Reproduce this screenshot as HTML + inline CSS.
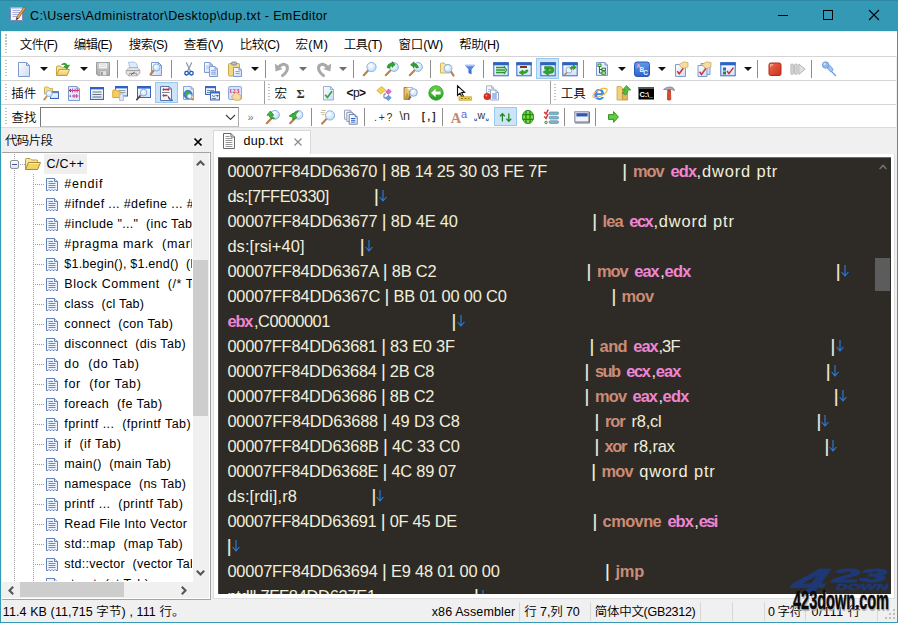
<!DOCTYPE html><html><head><meta charset="utf-8"><title>EmEditor</title><style>
*{box-sizing:border-box;margin:0;padding:0}
html,body{width:898px;height:623px;overflow:hidden}
body{position:relative;background:#f0f0f0;font-family:"Liberation Sans","Noto Sans CJK SC",sans-serif;font-size:12px;color:#000;font-weight:350}
.a{position:absolute}
.t{position:absolute;white-space:pre;line-height:1}
.e{color:#f1efdc}
.m{color:#cd8b77;font-weight:bold}
.r{color:#f086d2;font-weight:bold}
.dn{color:#2a84e8}
.bb{font-size:18.6px;line-height:0;position:relative;top:0.6px}
svg{position:absolute;overflow:visible}
</style></head><body>
<svg width="0" height="0" style="position:absolute"><defs>
<linearGradient id="gDoc" x1="0" y1="0" x2="1" y2="1"><stop offset="0" stop-color="#ffffff"/><stop offset="1" stop-color="#c9daf7"/></linearGradient>
<linearGradient id="gFold" x1="0" y1="0" x2="0" y2="1"><stop offset="0" stop-color="#fbeeb0"/><stop offset="1" stop-color="#edc85a"/></linearGradient>
<radialGradient id="gLens" cx="0.4" cy="0.35" r="0.7"><stop offset="0" stop-color="#ffffff"/><stop offset="1" stop-color="#b9dcfb"/></radialGradient>
<linearGradient id="gWin" x1="0" y1="0" x2="0" y2="1"><stop offset="0" stop-color="#ffffff"/><stop offset="1" stop-color="#cfe2fb"/></linearGradient>
<linearGradient id="gGreen" x1="0" y1="0" x2="0" y2="1"><stop offset="0" stop-color="#6fd24a"/><stop offset="1" stop-color="#1f9a1f"/></linearGradient>
<linearGradient id="gGray" x1="0" y1="0" x2="0" y2="1"><stop offset="0" stop-color="#d0d0d0"/><stop offset="1" stop-color="#a8a8a8"/></linearGradient>
<linearGradient id="gBlue" x1="0" y1="0" x2="0" y2="1"><stop offset="0" stop-color="#5f9bea"/><stop offset="1" stop-color="#2f62c8"/></linearGradient>
<linearGradient id="gRed" x1="0" y1="0" x2="1" y2="1"><stop offset="0" stop-color="#f0684a"/><stop offset="1" stop-color="#c8321e"/></linearGradient>
</defs></svg>
<div class="a" style="left:0;top:0;width:898px;height:623px;background:#3399b5"></div>
<div class="a" style="left:0;top:0;width:898px;height:1px;background:#2b87a2"></div>
<span class="t" style="left:30.0px;top:10.0px;font-size:12.5px;letter-spacing:0.39px;">C:\Users\Administrator\Desktop\dup.txt - EmEditor</span>
<svg style="left:9px;top:6px" width="17" height="16" viewBox="0 0 17 16"><rect x="1.5" y="1.5" width="12" height="13" fill="#f4f6ff" stroke="#7d86b8"/><path d="M3.5 4.5 H11 M3.5 6.5 H11 M3.5 8.5 H11 M3.5 10.5 H9" stroke="#9aa4d8" stroke-width="0.9"/><path d="M1.5 1.5 H13.5 V3 H1.5 Z" fill="#c8cdea"/><path d="M14.8 1 L16.4 2.4 L9.4 12.6 L7.2 14 L7.6 11.4 Z" fill="#e8a24a" stroke="#8a5a1e" stroke-width="0.7"/><path d="M7.6 11.4 L9.4 12.6 L7.2 14 Z" fill="#333"/></svg>
<div class="a" style="left:778px;top:15px;width:10px;height:1px;background:#000"></div>
<div class="a" style="left:823px;top:10px;width:10px;height:10px;border:1px solid #000"></div>
<svg style="left:869px;top:10px" width="10" height="10"><path d="M0 0 L10 10 M10 0 L0 10" stroke="#000" stroke-width="1.1"/></svg>
<div class="a" style="left:1px;top:31px;width:896px;height:591px;background:#f0f0f0"></div>
<div class="a" style="left:1px;top:31px;width:896px;height:25px;background:#fff;border-top:1px solid #d9f0f7"></div>
<span class="t" style="left:19.7px;top:39.0px;font-size:12.5px;letter-spacing:-0.69px;">文件(F)</span>
<span class="t" style="left:73.8px;top:39.0px;font-size:12.5px;letter-spacing:-0.79px;">编辑(E)</span>
<span class="t" style="left:128.8px;top:39.0px;font-size:12.5px;letter-spacing:-0.64px;">搜索(S)</span>
<span class="t" style="left:183.8px;top:39.0px;font-size:12.5px;letter-spacing:-0.49px;">查看(V)</span>
<span class="t" style="left:239.7px;top:39.0px;font-size:12.5px;letter-spacing:-0.51px;">比较(C)</span>
<span class="t" style="left:295.5px;top:39.0px;font-size:12.5px;letter-spacing:0.35px;">宏(M)</span>
<span class="t" style="left:343.7px;top:39.0px;font-size:12.5px;letter-spacing:-0.57px;">工具(T)</span>
<span class="t" style="left:398.5px;top:39.0px;font-size:12.5px;letter-spacing:-0.13px;">窗口(W)</span>
<span class="t" style="left:459.3px;top:39.0px;font-size:12.5px;letter-spacing:-0.51px;">帮助(H)</span>
<div class="a" style="left:1px;top:56px;width:895px;height:72px;background:#fff"></div>
<div class="a" style="left:1px;top:56px;width:895px;height:1px;background:#d4d4d4"></div>
<div class="a" style="left:1px;top:80px;width:895px;height:1px;background:#d4d4d4"></div>
<div class="a" style="left:1px;top:104px;width:895px;height:1px;background:#d4d4d4"></div>
<div class="a" style="left:1px;top:127px;width:895px;height:1px;background:#dcdcdc"></div>
<div class="a" style="left:5px;top:34px;width:2px;height:20px;background:repeating-linear-gradient(#c2c2c2 0 1.5px,transparent 1.5px 3px)"></div>
<div class="a" style="left:5px;top:60px;width:2px;height:18px;background:repeating-linear-gradient(#c2c2c2 0 1.5px,transparent 1.5px 3px)"></div>
<div class="a" style="left:5px;top:84px;width:2px;height:18px;background:repeating-linear-gradient(#c2c2c2 0 1.5px,transparent 1.5px 3px)"></div>
<div class="a" style="left:5px;top:108px;width:2px;height:18px;background:repeating-linear-gradient(#c2c2c2 0 1.5px,transparent 1.5px 3px)"></div>
<div class="a" style="left:536px;top:58px;width:23px;height:21px;background:#cce4f7;border:1px solid #99c9ef"></div>
<svg style="left:16px;top:61px" width="16" height="16" viewBox="0 0 16 16"><path d="M2.5 1.5 H10.5 L13.5 4.5 V15.5 H2.5 Z" fill="url(#gDoc)" stroke="#7f9ad0"/><path d="M10.5 1.5 V4.5 H13.5" fill="none" stroke="#7f9ad0"/></svg>
<svg style="left:55px;top:61px" width="16" height="16" viewBox="0 0 16 16"><path d="M1.5 14 V6 Q1.5 5 2.5 5 H5.5 L7 6.5 H11.5 V8" fill="#f7e08a" stroke="#c9a646"/><path d="M1.5 14.5 L4 8.5 H14.5 L12 14.5 Z" fill="url(#gFold)" stroke="#c19a3a"/><path d="M6.5 3.5 Q10.5 0.5 12.5 4.5 L14.5 4 L12 8 L9 5.5 L11 5 Q9.5 2.5 6.5 3.5 Z" fill="#2fa52f" stroke="#1c7f1c" stroke-width="0.6"/></svg>
<svg style="left:95px;top:61px" width="16" height="16" viewBox="0 0 16 16"><path d="M1.5 1.5 H14.5 V14.5 H3 L1.5 13 Z" fill="url(#gGray)" stroke="#9c9c9c"/><rect x="3.8" y="2" width="8.4" height="5.8" fill="#fafafa" stroke="#b8b8b8" stroke-width="0.6"/><path d="M5 3.8 H11 M5 5.6 H11" stroke="#d0d0d0" stroke-width="0.8"/><rect x="4.8" y="9.8" width="6.8" height="4.7" fill="#e2e2e2" stroke="#a8a8a8" stroke-width="0.6"/><rect x="5.8" y="10.8" width="2" height="3.2" fill="#9a9a9a"/></svg>
<svg style="left:125px;top:61px" width="16" height="16" viewBox="0 0 16 16"><path d="M5.2 7.5 L3.4 1.2 H9.6 L12 3.2 L12.6 7.5 Z" fill="#dcebff" stroke="#9db8e0" stroke-width="0.8"/><path d="M1.2 9.4 L4 6.6 H12.6 L14.8 9 V12.4 L12 14.8 H3.6 L1.2 12.6 Z" fill="#e4e4e4" stroke="#a2a2a2" stroke-width="0.8"/><path d="M1.4 9.6 H14.6 M3.8 14.6 L4.6 12.4 H11.6 L12 14.6" fill="none" stroke="#8a8a8a" stroke-width="0.8"/><path d="M6 13.6 L9.6 11.2" stroke="#555" stroke-width="1"/></svg>
<svg style="left:148px;top:61px" width="16" height="16" viewBox="0 0 16 16"><path d="M3.5 1.5 H10.5 L13.5 4.5 V14.5 H3.5 Z" fill="url(#gDoc)" stroke="#7f9ad0"/><path d="M10.5 1.5 V4.5 H13.5" fill="none" stroke="#7f9ad0"/><path d="M5.98 9.02 L2.5 13.5" stroke="#b9824f" stroke-width="2.2" stroke-linecap="round"/><circle cx="8.5" cy="6.5" r="3.6" fill="url(#gLens)" stroke="#8db2dc" stroke-width="1"/></svg>
<svg style="left:181px;top:61px" width="16" height="16" viewBox="0 0 16 16"><path d="M5.4 1.8 L9.4 10 M10.6 1.8 L6.6 10" stroke="#8796ad" stroke-width="1.2" fill="none" stroke-linecap="round"/><circle cx="5.6" cy="12.2" r="1.8" fill="none" stroke="#1f56b8" stroke-width="1.3"/><circle cx="10.4" cy="12.2" r="1.8" fill="none" stroke="#1f56b8" stroke-width="1.3"/></svg>
<svg style="left:203px;top:61px" width="16" height="16" viewBox="0 0 16 16"><path d="M1.5 1.5 H7 L9.5 4 V11.5 H1.5 Z" fill="url(#gDoc)" stroke="#7f9ad0"/><path d="M7 1.5 V4 H9.5" fill="none" stroke="#7f9ad0"/><path d="M3 5 H7 M3 7 H7.5" stroke="#8fb2ee" stroke-width="0.8"/><path d="M6.5 5.5 H12 L14.5 8 V15.5 H6.5 Z" fill="url(#gDoc)" stroke="#7f9ad0"/><path d="M12 5.5 V8 H14.5" fill="none" stroke="#7f9ad0"/><path d="M8.2 9.4 H12.8 M8.2 11.2 H12.8 M8.2 13 H12.8" stroke="#6d9be8" stroke-width="0.9"/></svg>
<svg style="left:227px;top:61px" width="16" height="16" viewBox="0 0 16 16"><rect x="1.5" y="2.5" width="11" height="12.5" rx="1.2" fill="#f0d888" stroke="#c9a646"/><rect x="4.5" y="1" width="5" height="3" rx="1" fill="#b8bcc6" stroke="#7c828f" stroke-width="0.8"/><path d="M6.5 6.5 H12 L14.5 9 V15.5 H6.5 Z" fill="url(#gDoc)" stroke="#7f9ad0"/><path d="M12 6.5 V9 H14.5" fill="none" stroke="#7f9ad0"/><path d="M8.5 10.5 H12.5 M8.5 12.5 H12.5" stroke="#6d9be8" stroke-width="0.9"/></svg>
<svg style="left:274px;top:61px" width="16" height="16" viewBox="0 0 16 16"><path d="M4 7 Q8.5 0.8 13 5 Q15 9.5 8.5 14.6" fill="none" stroke="#a9a9a9" stroke-width="3.1" stroke-linecap="round"/><path d="M0.8 2.6 L1.6 10.4 L8.6 8 Z" fill="#a9a9a9"/></svg>
<svg style="left:316px;top:61px" width="16" height="16" viewBox="0 0 16 16"><path d="M12 7 Q7.5 0.8 3 5 Q1 9.5 7.5 14.6" fill="none" stroke="#a9a9a9" stroke-width="3.1" stroke-linecap="round"/><path d="M15.2 2.6 L14.4 10.4 L7.4 8 Z" fill="#a9a9a9"/></svg>
<svg style="left:362px;top:61px" width="16" height="16" viewBox="0 0 16 16"><path d="M6.28 9.22 L1.8 14.2" stroke="#b9824f" stroke-width="2.2" stroke-linecap="round"/><circle cx="9.5" cy="6" r="4.6" fill="url(#gLens)" stroke="#8db2dc" stroke-width="1"/></svg>
<svg style="left:384px;top:61px" width="16" height="16" viewBox="0 0 16 16"><path d="M6.92 9.08 L1.8 14.2" stroke="#b9824f" stroke-width="2.2" stroke-linecap="round"/><circle cx="10" cy="6" r="4.4" fill="url(#gLens)" stroke="#8db2dc" stroke-width="1"/><path d="M3 6.5 Q4 2 8 2.2 L8 0.6 L11.2 3.6 L8 6.4 L8 4.6 Q6 4.6 5.4 7.2 Z" fill="#2fa52f" stroke="#187a18" stroke-width="0.6"/></svg>
<svg style="left:408px;top:61px" width="16" height="16" viewBox="0 0 16 16"><path d="M6.92 9.08 L1.8 14.2" stroke="#b9824f" stroke-width="2.2" stroke-linecap="round"/><circle cx="10" cy="6" r="4.4" fill="url(#gLens)" stroke="#8db2dc" stroke-width="1"/><path d="M10.5 6.5 Q9.6 2.6 6 2.4 L6 0.8 L2.6 3.8 L6 6.6 L6 4.8 Q7.6 4.8 8.2 7 Z" fill="#2fa52f" stroke="#187a18" stroke-width="0.6"/></svg>
<svg style="left:439px;top:61px" width="16" height="16" viewBox="0 0 16 16"><path d="M1.5 12 V3 Q1.5 2 2.5 2 H5 L6.5 3.5 H10.5 V12 Z" fill="#f7e6a8" stroke="#d2b45c"/><path d="M11.8 10.3 L14.5 14.5" stroke="#b9824f" stroke-width="2.2" stroke-linecap="round"/><circle cx="9" cy="7.5" r="4" fill="url(#gLens)" stroke="#8db2dc" stroke-width="1"/></svg>
<svg style="left:462px;top:61px" width="16" height="16" viewBox="0 0 16 16"><path d="M3.4 4.2 H12.6 L9.2 8.4 V13 L6.8 11.8 V8.4 Z" fill="url(#gBlue)" stroke="#4a7ad8" stroke-width="0.7"/><path d="M3.8 4.6 H12.2" stroke="#b4d4fa" stroke-width="1"/></svg>
<svg style="left:493px;top:61px" width="16" height="16" viewBox="0 0 16 16"><rect x="0.8" y="1.8" width="14.4" height="13" fill="url(#gWin)" stroke="#3a68c0"/><rect x="0.3" y="1.3" width="15.4" height="3" fill="#2e63c4"/><path d="M3 6.5 H12 M3 9 H12 M3 11.5 H12" stroke="#2a9a2a" stroke-width="1.6"/><path d="M11 5 L13.5 9 L11 13" fill="none" stroke="#2a9a2a" stroke-width="1.3"/></svg>
<svg style="left:516px;top:61px" width="16" height="16" viewBox="0 0 16 16"><rect x="0.8" y="1.8" width="14.4" height="13" fill="url(#gWin)" stroke="#3a68c0"/><rect x="0.3" y="1.3" width="15.4" height="3" fill="#2e63c4"/><path d="M4 6 H11" stroke="#7a3a10" stroke-width="2"/><path d="M12 9 Q12 12.5 7 12.5 L7 14 L3 11.5 L7 9 L7 10.5 Q10 10.5 10 9 Z" fill="#2fa52f" stroke="#187a18" stroke-width="0.5"/></svg>
<svg style="left:540px;top:61px" width="16" height="16" viewBox="0 0 16 16"><rect x="0.8" y="1.8" width="14.4" height="13" fill="url(#gWin)" stroke="#3a68c0"/><rect x="0.3" y="1.3" width="15.4" height="3" fill="#2e63c4"/><path d="M4.6 5.6 H10.6 Q14 5.6 14 9 Q14 12.4 10.4 12.4 H8.4 V14.4 L3 11 L8.4 7.6 V9.8 H10.2 Q11.2 9.8 11.2 9 Q11.2 8.2 10.2 8.2 H4.6 Z" fill="#2fa52f" stroke="#187a18" stroke-width="0.5"/></svg>
<svg style="left:562px;top:61px" width="16" height="16" viewBox="0 0 16 16"><rect x="0.8" y="1.8" width="14.4" height="13" fill="url(#gWin)" stroke="#3a68c0"/><rect x="0.3" y="1.3" width="15.4" height="3" fill="#2e63c4"/><circle cx="7" cy="9" r="3" fill="#eef5ff" stroke="#9ab0cc"/><path d="M5 11.5 L2.5 14" stroke="#b9824f" stroke-width="1.6"/><path d="M8 7.5 Q9 4.8 11.5 5.2 L11.5 3.8 L14.3 6.4 L11.5 8.8 L11.5 7.2 Q10 7 9.6 8.6 Z" fill="#2fa52f" stroke="#187a18" stroke-width="0.5"/></svg>
<svg style="left:594px;top:61px" width="16" height="16" viewBox="0 0 16 16"><path d="M2.5 1.5 H11 L13.5 4 V14.5 H2.5 Z" fill="url(#gDoc)" stroke="#7f9ad0"/><path d="M11 1.5 V4 H13.5" fill="none" stroke="#7f9ad0"/><path d="M5.5 5 V12 H8 M5.5 8.5 H8" fill="none" stroke="#1e7a1e" stroke-width="1"/><rect x="4" y="3" width="3" height="2.4" fill="#dff4d8" stroke="#1e7a1e" stroke-width="0.9"/><rect x="8" y="7.2" width="3.4" height="2.4" fill="#dff4d8" stroke="#1e7a1e" stroke-width="0.9"/><rect x="8" y="10.8" width="3.4" height="2.4" fill="#dff4d8" stroke="#1e7a1e" stroke-width="0.9"/></svg>
<svg style="left:634px;top:61px" width="16" height="16" viewBox="0 0 16 16"><rect x="0.5" y="1" width="15" height="14.5" rx="2.5" fill="url(#gBlue)" stroke="#2a58bd"/><text x="2.2" y="6.5" font-size="6" font-weight="bold" fill="#f4b4e4" font-family="Liberation Sans,sans-serif">A</text><text x="5.6" y="10.5" font-size="6.5" font-weight="bold" fill="#e8f4ff" font-family="Liberation Sans,sans-serif">B</text><text x="9.2" y="14.3" font-size="6.5" font-weight="bold" fill="#e8f4ff" font-family="Liberation Sans,sans-serif">C</text></svg>
<svg style="left:673px;top:61px" width="16" height="16" viewBox="0 0 16 16"><path d="M2.5 3.5 H10 L12.5 6 V15.5 H2.5 Z" fill="url(#gDoc)" stroke="#7f9ad0"/><path d="M10 3.5 V6 H12.5" fill="none" stroke="#7f9ad0"/><path d="M4.2 10.2 l2 2.6 l4.4 -6" fill="none" stroke="#c83232" stroke-width="1.5"/><path d="M6 3.5 L10.5 0.8 L15 1.6 L15 6 L11 7.5 L8.5 6.5 Z" fill="#f7dca0" stroke="#c9a25a" stroke-width="0.7"/></svg>
<svg style="left:696px;top:61px" width="16" height="16" viewBox="0 0 16 16"><path d="M5 2.5 H11.5 L14 5 V13.5 H5 Z" fill="url(#gDoc)" stroke="#7f9ad0"/><path d="M11.5 2.5 V5 H14" fill="none" stroke="#7f9ad0"/><path d="M2 4.5 H8.5 L11 7 V15.5 H2 Z" fill="url(#gDoc)" stroke="#7f9ad0"/><path d="M8.5 4.5 V7 H11" fill="none" stroke="#7f9ad0"/><path d="M3.5 10.8 l2 2.6 l4.4 -6" fill="none" stroke="#c83232" stroke-width="1.5"/><path d="M6 3.5 L10.5 0.8 L15 1.6 L15 6 L11 7.5 L8.5 6.5 Z" fill="#f7dca0" stroke="#c9a25a" stroke-width="0.7"/></svg>
<svg style="left:720px;top:61px" width="16" height="16" viewBox="0 0 16 16"><rect x="0.8" y="1.8" width="14.4" height="13" fill="url(#gWin)" stroke="#3a68c0"/><rect x="0.3" y="1.3" width="15.4" height="3" fill="#2e63c4"/><rect x="3" y="6.5" width="3" height="3" fill="#2f62c8"/><rect x="3" y="10.5" width="3" height="3" fill="#2a8a2a"/><path d="M7 10 l2 2.6 l4.4 -6" fill="none" stroke="#c83232" stroke-width="1.5"/></svg>
<svg style="left:767px;top:61px" width="16" height="16" viewBox="0 0 16 16"><rect x="2" y="2" width="12" height="12.5" rx="1.8" fill="url(#gRed)" stroke="#b02a18"/><path d="M3 3 H7 L3 6.5 Z" fill="#f7a58c"/></svg>
<svg style="left:790px;top:61px" width="16" height="16" viewBox="0 0 16 16"><rect x="0.8" y="3" width="2.6" height="10.5" rx="1.2" fill="#d6d6d6" stroke="#b0b0b0" stroke-width="0.8"/><rect x="4.6" y="3" width="2.6" height="10.5" rx="1.2" fill="#d6d6d6" stroke="#b0b0b0" stroke-width="0.8"/><path d="M8.8 3 L15.2 8.2 L8.8 13.5 Z" fill="#e0e0e0" stroke="#b0b0b0" stroke-width="0.9"/></svg>
<svg style="left:821px;top:61px" width="16" height="16" viewBox="0 0 16 16"><path d="M9.5 9.5 L15 15" stroke="#6f9ee0" stroke-width="1.2"/><path d="M5.5 6.5 L8.5 4 L12 8 Q12.2 10.5 9.5 10.8 Z" fill="#9cc4f4" stroke="#6a9ade" stroke-width="0.8"/><circle cx="4.6" cy="4" r="3.2" fill="#8fbcf2" stroke="#5f92dc" stroke-width="0.8"/><circle cx="3.6" cy="3" r="1.1" fill="#d8eaff"/></svg>
<svg style="left:39.9px;top:66.7px" width="8" height="4" viewBox="0 0 8 4"><path d="M0 0 H8 L4 4 Z" fill="#111"/></svg>
<svg style="left:80px;top:66.7px" width="8" height="4" viewBox="0 0 8 4"><path d="M0 0 H8 L4 4 Z" fill="#111"/></svg>
<svg style="left:250.8px;top:66.7px" width="8" height="4" viewBox="0 0 8 4"><path d="M0 0 H8 L4 4 Z" fill="#111"/></svg>
<svg style="left:617.5px;top:66.7px" width="8" height="4" viewBox="0 0 8 4"><path d="M0 0 H8 L4 4 Z" fill="#111"/></svg>
<svg style="left:657.6px;top:66.7px" width="8" height="4" viewBox="0 0 8 4"><path d="M0 0 H8 L4 4 Z" fill="#111"/></svg>
<svg style="left:743.5px;top:66.7px" width="8" height="4" viewBox="0 0 8 4"><path d="M0 0 H8 L4 4 Z" fill="#111"/></svg>
<svg style="left:299px;top:66.7px" width="8" height="4" viewBox="0 0 8 4"><path d="M0 0 H8 L4 4 Z" fill="#6d6d6d"/></svg>
<svg style="left:339px;top:66.7px" width="8" height="4" viewBox="0 0 8 4"><path d="M0 0 H8 L4 4 Z" fill="#6d6d6d"/></svg>
<div class="a" style="left:116.9px;top:60px;width:1px;height:18px;background:#8e8e8e"></div>
<div class="a" style="left:170.9px;top:60px;width:1px;height:18px;background:#8e8e8e"></div>
<div class="a" style="left:264.9px;top:60px;width:1px;height:18px;background:#8e8e8e"></div>
<div class="a" style="left:352.9px;top:60px;width:1px;height:18px;background:#8e8e8e"></div>
<div class="a" style="left:430.4px;top:60px;width:1px;height:18px;background:#8e8e8e"></div>
<div class="a" style="left:483.4px;top:60px;width:1px;height:18px;background:#8e8e8e"></div>
<div class="a" style="left:583.4px;top:60px;width:1px;height:18px;background:#8e8e8e"></div>
<div class="a" style="left:757.4px;top:60px;width:1px;height:18px;background:#8e8e8e"></div>
<div class="a" style="left:811.4px;top:60px;width:1px;height:18px;background:#8e8e8e"></div>
<span class="t" style="left:11.3px;top:87.6px;font-size:12.5px;">插件</span>
<div class="a" style="left:155px;top:82px;width:23px;height:21px;background:#cce4f7;border:1px solid #99c9ef"></div>
<svg style="left:43px;top:85px" width="16" height="16" viewBox="0 0 16 16"><path d="M1.5 9 V3 Q1.5 2 2.5 2 H5 L6.5 3.5 H9.5 V9 Z" fill="#f7de7e" stroke="#d2b04c"/><rect x="7.5" y="6.5" width="8" height="7" fill="url(#gWin)" stroke="#3a68c0"/><rect x="7" y="6" width="9" height="2.2" fill="#5f83c0"/><path d="M3.8 11.2 L1.2 14.6" stroke="#c98a4a" stroke-width="1.8" stroke-linecap="round"/><circle cx="6.2" cy="8.6" r="3.1" fill="url(#gLens)" stroke="#9ab8dc"/></svg>
<svg style="left:66px;top:85px" width="16" height="16" viewBox="0 0 16 16"><path d="M2.5 1.5 H11 L13.5 4 V15.5 H2.5 Z" fill="#e4ecfb" stroke="#7f9ad0"/><path d="M11 1.5 V4 H13.5" fill="none" stroke="#7f9ad0"/><path d="M4 5.5 H13 M6 11 H12.5" stroke="#d6285a" stroke-width="1.2"/><path d="M6.5 3.5 V7.5 M9 3.5 V7.5 M11.2 3.5 V7.5 M8 9 V13 M10.6 9 V13" stroke="#c050b0" stroke-width="1"/><path d="M5 4 L3.2 5.5 L5 7" fill="none" stroke="#333" stroke-width="0.9"/><rect x="3.6" y="10.4" width="1.4" height="1.4" fill="#3355bb"/></svg>
<svg style="left:89px;top:85px" width="16" height="16" viewBox="0 0 16 16"><rect x="1.5" y="2.5" width="13" height="12" fill="url(#gWin)" stroke="#3a68c0"/><rect x="1" y="2" width="14" height="2.4" fill="#2e63c4"/><path d="M3.5 7 H12.5 M3.5 9.5 H12.5 M3.5 12 H12.5" stroke="#5a6478" stroke-width="0.9"/></svg>
<svg style="left:112px;top:85px" width="16" height="16" viewBox="0 0 16 16"><rect x="3.5" y="1.5" width="12" height="9.5" fill="url(#gWin)" stroke="#3a68c0"/><rect x="3" y="1" width="13" height="2.4" fill="#2e63c4"/><path d="M6.5 5.5 H13.5 M6.5 7.5 H13.5" stroke="#8a94a8" stroke-width="0.9"/><path d="M0.8 12.5 V5.8 Q0.8 5 1.6 5 H4 L5 6 H8 V12.5 Z" fill="#f5cf5c" stroke="#d4a838"/><path d="M7.5 15.5 V11 Q7.5 8.5 9.5 8.5 Q11.5 8.5 11.5 11 V15.5 Z" fill="#d9e4f7" stroke="#a9b8d6" stroke-width="0.8"/></svg>
<svg style="left:135px;top:85px" width="16" height="16" viewBox="0 0 16 16"><rect x="2.5" y="1.5" width="13" height="11" fill="url(#gWin)" stroke="#3a68c0"/><rect x="2" y="1" width="14" height="2.6" fill="#2e63c4"/><path d="M5 11 L1.8 14.6" stroke="#4a4a4a" stroke-width="1.8" stroke-linecap="round"/><circle cx="8.6" cy="7.6" r="3.3" fill="url(#gLens)" stroke="#8fa8cc"/></svg>
<svg style="left:158px;top:85px" width="16" height="16" viewBox="0 0 16 16"><path d="M2.5 1.5 H11 L13.5 4 V15.5 H2.5 Z" fill="#f4f7fd" stroke="#5f76a8"/><path d="M11 1.5 V4 H13.5" fill="none" stroke="#5f76a8"/><path d="M5 4.5 H11 M5 10.5 H9" stroke="#d02828" stroke-width="1.3"/><path d="M4.2 4.5 l1.8 -1.5 v3 z M11.6 4.5 l-1.8 -1.5 v3 z M4.2 10.5 l1.8 -1.5 v3 z" fill="#d02828"/><path d="M4 7.5 H11.5" stroke="#6b7894" stroke-width="0.9"/><path d="M9 9.5 L13 14.5 L11 14.5 Z" fill="#2a2f45"/><path d="M12 15.5 L14.8 15.2" stroke="#3a6ad0" stroke-width="1.4"/></svg>
<svg style="left:181px;top:85px" width="16" height="16" viewBox="0 0 16 16"><path d="M2.5 1.5 H10 L12.5 4 V14.5 H2.5 Z" fill="#e8effb" stroke="#8fa4d0"/><path d="M10 1.5 V4 H12.5" fill="none" stroke="#8fa4d0"/><circle cx="7" cy="9.5" r="4.2" fill="#3a8ad8" stroke="#2a62b0" stroke-width="0.7"/><path d="M4 8 Q6 6 8 7 Q9 9 7 10.5 Q5 11.5 4.5 10 Z" fill="#3fae3f"/><circle cx="8.6" cy="11.2" r="2.2" fill="#f2f8ff" stroke="#9ab0cc" stroke-width="0.7"/><path d="M10.2 12.8 L12.6 15.2" stroke="#c98a3a" stroke-width="1.5"/></svg>
<svg style="left:204px;top:85px" width="16" height="16" viewBox="0 0 16 16"><rect x="1.5" y="1.5" width="10" height="8" fill="url(#gWin)" stroke="#3a68c0"/><rect x="1" y="1" width="11" height="2.2" fill="#3a68c8"/><path d="M3 5.5 H10 M3 7.5 H10" stroke="#7a86a0" stroke-width="1"/><rect x="6.5" y="7" width="9" height="8" fill="url(#gWin)" stroke="#3a68c0"/><rect x="6" y="6.5" width="10" height="2" fill="#3a68c8"/><path d="M8 10 L9.8 12 L11.5 10" fill="#dfe8f8" stroke="#5a6a90" stroke-width="0.8"/><path d="M12 10 L13.3 12 L14.8 10 Z" fill="#3a58a8"/><path d="M8 13.5 H12" stroke="#6a7690" stroke-width="0.9"/></svg>
<svg style="left:227px;top:85px" width="16" height="16" viewBox="0 0 16 16"><rect x="1.5" y="1.5" width="13" height="13" rx="1.5" fill="#d5e2fa" stroke="#8fa8e0"/><text x="2" y="7.6" font-size="6.6" font-weight="bold" fill="#d03060" font-family="Liberation Serif,serif" letter-spacing="0.3">123</text><path d="M4.5 12 L8.5 7.5 Q9.5 7 10 8 L12.5 9.5 Q14.5 11 14 13 L13 15.2 H7.5 Z" fill="#f7dca0" stroke="#c99a4a" stroke-width="0.7"/></svg>
<div class="a" style="left:264px;top:81px;width:1px;height:23px;background:#a0a0a0"></div>
<div class="a" style="left:268px;top:84px;width:2px;height:18px;background:repeating-linear-gradient(#c2c2c2 0 1.5px,transparent 1.5px 3px)"></div>
<span class="t" style="left:274.6px;top:87.6px;font-size:12.5px;">宏</span>
<svg style="left:293px;top:85px" width="16" height="16" viewBox="0 0 16 16"><text x="3.6" y="12.6" font-size="12.5" font-weight="bold" fill="#3a2f2a" font-family="Liberation Serif,serif">Σ</text></svg>
<svg style="left:320px;top:85px" width="16" height="16" viewBox="0 0 16 16"><path d="M3.5 1.5 H10.5 L13.5 4.5 V15 H3.5 Z" fill="url(#gDoc)" stroke="#9fb0cc"/><path d="M10.5 1.5 V4.5 H13.5" fill="none" stroke="#9fb0cc"/><path d="M5.2 9.8 l2.2 2.6 l4.6 -6.2" fill="none" stroke="#3aa03a" stroke-width="1.7"/></svg>
<svg style="left:348px;top:85px" width="16" height="16" viewBox="0 0 16 16"><text x="-1.4" y="12" font-size="12" fill="#111" font-family="Liberation Sans,sans-serif" letter-spacing="-0.6"><tspan font-weight="bold">&lt;</tspan>p<tspan font-weight="bold">&gt;</tspan></text></svg>
<svg style="left:375.5px;top:85px" width="16" height="16" viewBox="0 0 16 16"><path d="M8 9 V13 H11 M8 9 H10" fill="none" stroke="#6b7894" stroke-width="1"/><path d="M0.8 5.4 L5.6 1.4 L9.6 5 L4.8 9 Z" fill="#f3d24e" stroke="#c9a62e" stroke-width="0.7"/><path d="M9.6 6.8 L12.6 4 L15.2 6.6 L12.2 9.4 Z" fill="#e667c8" stroke="#b0409a" stroke-width="0.6"/><path d="M9.6 13 L12.6 10.2 L15.2 12.8 L12.2 15.6 Z" fill="#6a9ee8" stroke="#3a6ec0" stroke-width="0.6"/></svg>
<svg style="left:402px;top:85px" width="16" height="16" viewBox="0 0 16 16"><path d="M2 14.5 V2.5 H6 L7.5 4 V14.5 Z" fill="#e8c46a" stroke="#8a6a2a" stroke-width="0.8"/><path d="M4.5 2.5 H10.5 V9" fill="#f4f6fb" stroke="#9aa6c0" stroke-width="0.8"/><path d="M2 14.5 L5 7 L8 14.5 Z" fill="#c99a3a"/><path d="M9 11.5 L6.5 14.5" stroke="#6a6a6a" stroke-width="1.8"/><circle cx="11.5" cy="7.5" r="3.8" fill="url(#gLens)" stroke="#8fa8cc"/></svg>
<svg style="left:428px;top:85px" width="16" height="16" viewBox="0 0 16 16"><circle cx="8" cy="8" r="7.2" fill="url(#gGreen)" stroke="#2c962c" stroke-width="0.8"/><path d="M3 8 L7.6 3.8 V6.4 H12.6 V9.6 H7.6 V12.2 Z" fill="#ffffff"/></svg>
<svg style="left:456px;top:85px" width="16" height="16" viewBox="0 0 16 16"><path d="M1.5 0.8 V10.5 L4 8.2 L6 12.2 L7.6 11.4 L5.6 7.6 L8.6 7.4 Z" fill="#ffffff" stroke="#111" stroke-width="1.1"/><rect x="3" y="11.8" width="12.5" height="3.4" fill="#f2d24a" stroke="#c9a62e" stroke-width="0.8"/><path d="M5 13.5 H7 M8.5 13.5 H10.5 M12 13.5 H13.6" stroke="#8a6a1a" stroke-width="0.9"/></svg>
<svg style="left:483px;top:85px" width="16" height="16" viewBox="0 0 16 16"><path d="M3.5 0.8 H8.6 L11 3.2 V9.8 H3.5 Z" fill="#f6f8fc" stroke="#a8b4c8"/><path d="M8.6 0.8 V3.2 H11" fill="none" stroke="#a8b4c8"/><path d="M5 4.5 H8 M5 6.5 H9" stroke="#9ab0d8" stroke-width="0.8"/><path d="M7.5 5 H12.9 L15.5 7.6 V15 H7.5 Z" fill="#fbfcff" stroke="#9aa8c0"/><path d="M12.9 5 V7.6 H15.5" fill="none" stroke="#9aa8c0"/><path d="M9.2 9 H13.8 M9.2 11 H13.8 M9.2 13 H13.8" stroke="#3a6ad0" stroke-width="0.9"/><circle cx="4.2" cy="11.5" r="3.3" fill="#d8321e" stroke="#a82414" stroke-width="0.6"/><circle cx="3.4" cy="10.5" r="1" fill="#f08a74"/></svg>
<div class="a" style="left:550px;top:81px;width:1px;height:23px;background:#a0a0a0"></div>
<div class="a" style="left:554px;top:84px;width:2px;height:18px;background:repeating-linear-gradient(#c2c2c2 0 1.5px,transparent 1.5px 3px)"></div>
<span class="t" style="left:560.8px;top:87.6px;font-size:12.5px;">工具</span>
<svg style="left:592px;top:85px" width="16" height="16" viewBox="0 0 16 16"><text x="1.4" y="14.8" font-size="20" font-weight="bold" fill="#3a8ae0" font-family="Liberation Sans,sans-serif">e</text><ellipse cx="8" cy="8" rx="8" ry="3.2" fill="none" stroke="#f0b83a" stroke-width="1.2" transform="rotate(-28 8 8)"/></svg>
<svg style="left:615px;top:85px" width="16" height="16" viewBox="0 0 16 16"><path d="M2 15 V1.5 H6 L7.5 3 V15 Z" fill="#f0d07a" stroke="#c9a646" stroke-width="0.8"/><path d="M7.5 15 V5 L12.5 7 V15 Z" fill="#e2b85a" stroke="#b8923a" stroke-width="0.8"/><path d="M11.5 0.5 L15.8 5 H13.4 L10.8 10 L7.5 8.2 L10 5 H7.6 Z" fill="#4fc23a" stroke="#2a8a2a" stroke-width="0.7"/></svg>
<svg style="left:638px;top:85px" width="16" height="16" viewBox="0 0 16 16"><rect x="0.5" y="2" width="15.5" height="12.5" fill="#000"/><rect x="0.5" y="2" width="15.5" height="2" fill="#555"/><text x="1.6" y="12" font-size="7.5" font-weight="bold" fill="#fff" font-family="Liberation Sans,sans-serif" letter-spacing="-0.3">C:\_</text></svg>
<svg style="left:661px;top:85px" width="16" height="16" viewBox="0 0 16 16"><path d="M2.5 4.5 Q5 1.5 10 2 Q13 2.5 13.5 5.5 L12 5 Q10.5 4 9.5 4.8 H6.5 Q4.5 4.2 2.5 4.5 Z" fill="#a8b0c0" stroke="#6a7490" stroke-width="0.7"/><path d="M6.8 5 H9.4 L9.8 14.5 Q8 15.8 6.4 14.5 Z" fill="#e04a2a" stroke="#a82a14" stroke-width="0.7"/></svg>
<span class="t" style="left:11.5px;top:111.6px;font-size:12.5px;">查找</span>
<div class="a" style="left:40px;top:107px;width:199px;height:20px;background:#fff;border:1px solid;border-color:#777 #aaa #c4c4c4 #777"></div>
<svg style="left:225px;top:114px" width="11" height="7"><path d="M1 1 L5.5 5.5 L10 1" fill="none" stroke="#444" stroke-width="1.2"/></svg>
<span class="t" style="left:247.6px;top:111.5px;font-size:11px;color:#777">»</span>
<div class="a" style="left:494px;top:107px;width:23px;height:19px;background:#cce4f7;border:1px solid #99c9ef"></div>
<svg style="left:265px;top:109px" width="16" height="16" viewBox="0 0 16 16"><path d="M6.92 8.88 L1.8 14.2" stroke="#b9824f" stroke-width="2.2" stroke-linecap="round"/><circle cx="10" cy="5.8" r="4.4" fill="url(#gLens)" stroke="#8db2dc" stroke-width="1"/><path d="M2 6.2 L5.4 2 L8.8 6.2 H6.8 Q7 8.6 9.6 9.4 Q5 10.4 4 6.2 Z" fill="#3fb83f" stroke="#187a18" stroke-width="0.7"/></svg>
<svg style="left:288px;top:109px" width="16" height="16" viewBox="0 0 16 16"><path d="M7.32 8.88 L2.2 14.2" stroke="#b9824f" stroke-width="2.2" stroke-linecap="round"/><circle cx="10.4" cy="5.8" r="4.4" fill="url(#gLens)" stroke="#8db2dc" stroke-width="1"/><path d="M1.2 7 L5.2 4 V5.8 Q6.6 2 10.6 2.6 Q7.6 3.8 7.6 7 L9 8.6 L4.6 10.6 L5.2 8.4 Z" fill="#3fb83f" stroke="#187a18" stroke-width="0.7"/></svg>
<svg style="left:320px;top:109px" width="16" height="16" viewBox="0 0 16 16"><path d="M6.78 9.62 L2.2 14.6" stroke="#b9824f" stroke-width="2.2" stroke-linecap="round"/><circle cx="10" cy="6.4" r="4.6" fill="url(#gLens)" stroke="#8db2dc" stroke-width="1"/><path d="M1.5 1.5 H6 M0.5 3.5 H5 M1.5 5.5 H4.6" stroke="#c8b898" stroke-width="0.9"/></svg>
<svg style="left:343px;top:109px" width="16" height="16" viewBox="0 0 16 16"><path d="M1.5 1.2 H7 L9 3.2 V10.2 H1.5 Z" fill="#f2f5fb" stroke="#9aa6c0"/><path d="M7 1.2 V3.2 H9" fill="none" stroke="#9aa6c0"/><path d="M3.8 3.4 H9.3 L11.3 5.4 V12.4 H3.8 Z" fill="#f2f5fb" stroke="#8f9cb8"/><path d="M9.3 3.4 V5.4 H11.3" fill="none" stroke="#8f9cb8"/><path d="M6.2 5.6 H12 L14.2 7.8 V15.2 H6.2 Z" fill="#fbfcff" stroke="#6f80a8"/><path d="M12 5.6 V7.8 H14.2" fill="none" stroke="#6f80a8"/><path d="M8 9.5 H12.4 M8 11.3 H12.4 M8 13.1 H12.4" stroke="#2f5fc8" stroke-width="1"/></svg>
<svg style="left:451px;top:109px" width="16" height="16" viewBox="0 0 16 16"><text x="-0.2" y="14" font-size="14.5" font-weight="bold" fill="#c48872" font-family="Liberation Serif,serif">A</text><text x="10" y="8.6" font-size="11" fill="#5a6ad0" font-family="Liberation Sans,sans-serif">a</text></svg>
<svg style="left:474px;top:109px" width="16" height="16" viewBox="0 0 16 16"><text x="3.4" y="9.6" font-size="10.5" fill="#333" font-family="Liberation Sans,sans-serif">w</text><path d="M0.8 9.6 V11.6 H2.6 V9.6 M12.4 9.6 V11.6 H14.2 V9.6" fill="none" stroke="#2f55b8" stroke-width="0.9"/></svg>
<svg style="left:498px;top:109px" width="16" height="16" viewBox="0 0 16 16"><path d="M4.4 12.4 V5 M2 7.2 L4.4 4.6 L6.8 7.2" fill="none" stroke="#1e8a1e" stroke-width="1.3"/><path d="M10.8 4.6 V12 M8.4 9.8 L10.8 12.4 L13.2 9.8" fill="none" stroke="#1e8a1e" stroke-width="1.3"/></svg>
<svg style="left:520px;top:109px" width="16" height="16" viewBox="0 0 16 16"><ellipse cx="8" cy="8" rx="5.6" ry="6.6" fill="#7fd84a" stroke="#2a9a1a" stroke-width="1"/><path d="M6 1.8 V14.2 M10 1.8 V14.2 M2.6 5.6 H13.4 M2.6 10.4 H13.4" stroke="#1e8a14" stroke-width="1.3"/></svg>
<svg style="left:543px;top:109px" width="16" height="16" viewBox="0 0 16 16"><rect x="6" y="3" width="9.6" height="2.6" rx="1.3" fill="#8ab4c8" stroke="#4a8aa8" stroke-width="0.7"/><rect x="6" y="7.4" width="9.6" height="2.6" rx="1.3" fill="#8ab4c8" stroke="#4a8aa8" stroke-width="0.7"/><rect x="6" y="11.8" width="9.6" height="2.6" rx="1.3" fill="#8ab4c8" stroke="#4a8aa8" stroke-width="0.7"/><path d="M1.2 3 l1.8 2 l2.2 -4.4 M1.2 7.4 l1.8 2 l2.2 -4.4" fill="none" stroke="#c83232" stroke-width="1.4"/><circle cx="3" cy="13.4" r="1.2" fill="#fff" stroke="#2a8a2a" stroke-width="1"/></svg>
<svg style="left:574px;top:109px" width="16" height="16" viewBox="0 0 16 16"><rect x="0.8" y="2.8" width="14.2" height="10.2" fill="#e4e9f2" stroke="#7a8498" stroke-width="1"/><rect x="2.4" y="4.2" width="11.2" height="3.2" fill="#2f55b8"/><path d="M2.4 9 H13.6 M2.4 11 H13.6" stroke="#ffffff" stroke-width="1"/><path d="M1 14 H15.4 V3" fill="none" stroke="#555" stroke-width="0.8"/></svg>
<svg style="left:605px;top:109px" width="16" height="16" viewBox="0 0 16 16"><path d="M3.5 5.6 H8.6 V2.6 L13.4 8 L8.6 13.4 V10.4 H3.5 Z" fill="#5fcf3a" stroke="#2a8a1a" stroke-width="0.9"/></svg>
<div class="a" style="left:310.9px;top:108px;width:1px;height:18px;background:#8e8e8e"></div>
<div class="a" style="left:364.4px;top:108px;width:1px;height:18px;background:#8e8e8e"></div>
<div class="a" style="left:441.9px;top:108px;width:1px;height:18px;background:#8e8e8e"></div>
<div class="a" style="left:564.4px;top:108px;width:1px;height:18px;background:#8e8e8e"></div>
<div class="a" style="left:595.4px;top:108px;width:1px;height:18px;background:#8e8e8e"></div>
<span class="t" style="left:374.0px;top:111.6px;font-size:10.5px;letter-spacing:1.75px;color:#333">.+?</span>
<span class="t" style="left:399.4px;top:109.6px;font-size:12.5px;letter-spacing:0.16px;color:#333">\n</span>
<span class="t" style="left:421.8px;top:111.4px;font-size:11px;letter-spacing:2.31px;font-weight:400;-webkit-text-stroke:0.25px #111;color:#111">[,]</span>
<span class="t" style="left:5.0px;top:135.4px;font-size:12.5px;letter-spacing:-0.67px;">代码片段</span>
<div class="a" style="left:2px;top:152px;width:209px;height:448px;background:#fff;border:1px solid #a4a4a4;border-left:none"></div>
<div id="tree" class="a" style="left:2px;top:153px;width:190px;height:428px;overflow:hidden">
<div class="a" style="left:12px;top:1px;width:1px;height:6px;background:repeating-linear-gradient(#a0a0a0 0 1px,transparent 1px 2px)"></div>
<div class="a" style="left:12px;top:17px;width:1px;height:412px;background:repeating-linear-gradient(#a0a0a0 0 1px,transparent 1px 2px)"></div>
<div class="a" style="left:31px;top:21px;width:1px;height:408px;background:repeating-linear-gradient(#a0a0a0 0 1px,transparent 1px 2px)"></div>
<div class="a" style="left:18px;top:11px;width:5px;height:1px;background:repeating-linear-gradient(90deg,#a0a0a0 0 1px,transparent 1px 2px)"></div>
<div class="a" style="left:8px;top:7px;width:9px;height:9px;border:1px solid #919191;border-radius:2px;background:linear-gradient(#fff,#e4e6ee)"></div>
<div class="a" style="left:10px;top:11px;width:5px;height:1px;background:#3a56b4"></div>
<div class="a" style="left:42px;top:1px;width:43px;height:20px;background:#efefef"></div>
<svg style="left:23px;top:5px" width="16" height="12" viewBox="0 0 16 12"><path d="M0.5 11.5 V1.5 Q0.5 0.5 1.5 0.5 H5 L6.5 2 H11.5 Q12.5 2 12.5 3 V4.5" fill="#f5e6a0" stroke="#b99a45"/><path d="M0.5 11.5 L3.5 4.5 H15.5 L12.5 11.5 Z" fill="#f1d466" stroke="#a88a32"/><path d="M4 5.5 H14.3" stroke="#faeeb5"/></svg>
<span class="t" style="left:44.5px;top:5.0px;font-size:12.5px;letter-spacing:0.31px;">C/C++</span>
<div class="a" style="left:33px;top:31px;width:9px;height:1px;background:repeating-linear-gradient(90deg,#a0a0a0 0 1px,transparent 1px 2px)"></div>
<svg style="left:44px;top:25px" width="12" height="13" viewBox="0 0 12 13"><path d="M0.5 0.5 H8.5 L11.5 3.5 V12.5 H10 L9 11.5 L8 12.5 H7 L6 11.5 L5 12.5 H4 L3 11.5 L2 12.5 H0.5 Z" fill="#eef4ff" stroke="#5573ad" stroke-width="0.9"/><path d="M8.5 0.5 V3.5 H11.5" fill="#dfe9fb" stroke="#5573ad" stroke-width="0.9"/><path d="M2.5 3.5 H7 M2.5 5.5 H9.5 M2.5 7.5 H9.5 M2.5 9.5 H9.5" stroke="#4f7fdc" stroke-width="0.9"/></svg>
<span class="t" style="left:62.3px;top:25.0px;font-size:12.5px;letter-spacing:0.81px;">#endif</span>
<div class="a" style="left:33px;top:51px;width:9px;height:1px;background:repeating-linear-gradient(90deg,#a0a0a0 0 1px,transparent 1px 2px)"></div>
<svg style="left:44px;top:45px" width="12" height="13" viewBox="0 0 12 13"><path d="M0.5 0.5 H8.5 L11.5 3.5 V12.5 H10 L9 11.5 L8 12.5 H7 L6 11.5 L5 12.5 H4 L3 11.5 L2 12.5 H0.5 Z" fill="#eef4ff" stroke="#5573ad" stroke-width="0.9"/><path d="M8.5 0.5 V3.5 H11.5" fill="#dfe9fb" stroke="#5573ad" stroke-width="0.9"/><path d="M2.5 3.5 H7 M2.5 5.5 H9.5 M2.5 7.5 H9.5 M2.5 9.5 H9.5" stroke="#4f7fdc" stroke-width="0.9"/></svg>
<span class="t" style="left:62.3px;top:45.0px;font-size:12.5px;letter-spacing:0.38px;">#ifndef ... #define ... #endif  (...)</span>
<div class="a" style="left:33px;top:71px;width:9px;height:1px;background:repeating-linear-gradient(90deg,#a0a0a0 0 1px,transparent 1px 2px)"></div>
<svg style="left:44px;top:65px" width="12" height="13" viewBox="0 0 12 13"><path d="M0.5 0.5 H8.5 L11.5 3.5 V12.5 H10 L9 11.5 L8 12.5 H7 L6 11.5 L5 12.5 H4 L3 11.5 L2 12.5 H0.5 Z" fill="#eef4ff" stroke="#5573ad" stroke-width="0.9"/><path d="M8.5 0.5 V3.5 H11.5" fill="#dfe9fb" stroke="#5573ad" stroke-width="0.9"/><path d="M2.5 3.5 H7 M2.5 5.5 H9.5 M2.5 7.5 H9.5 M2.5 9.5 H9.5" stroke="#4f7fdc" stroke-width="0.9"/></svg>
<span class="t" style="left:62.3px;top:65.0px;font-size:12.5px;letter-spacing:0.34px;">#include "..."  (inc Tab)</span>
<div class="a" style="left:33px;top:91px;width:9px;height:1px;background:repeating-linear-gradient(90deg,#a0a0a0 0 1px,transparent 1px 2px)"></div>
<svg style="left:44px;top:85px" width="12" height="13" viewBox="0 0 12 13"><path d="M0.5 0.5 H8.5 L11.5 3.5 V12.5 H10 L9 11.5 L8 12.5 H7 L6 11.5 L5 12.5 H4 L3 11.5 L2 12.5 H0.5 Z" fill="#eef4ff" stroke="#5573ad" stroke-width="0.9"/><path d="M8.5 0.5 V3.5 H11.5" fill="#dfe9fb" stroke="#5573ad" stroke-width="0.9"/><path d="M2.5 3.5 H7 M2.5 5.5 H9.5 M2.5 7.5 H9.5 M2.5 9.5 H9.5" stroke="#4f7fdc" stroke-width="0.9"/></svg>
<span class="t" style="left:62.3px;top:85.0px;font-size:12.5px;letter-spacing:0.73px;">#pragma mark  (mark Tab)</span>
<div class="a" style="left:33px;top:111px;width:9px;height:1px;background:repeating-linear-gradient(90deg,#a0a0a0 0 1px,transparent 1px 2px)"></div>
<svg style="left:44px;top:105px" width="12" height="13" viewBox="0 0 12 13"><path d="M0.5 0.5 H8.5 L11.5 3.5 V12.5 H10 L9 11.5 L8 12.5 H7 L6 11.5 L5 12.5 H4 L3 11.5 L2 12.5 H0.5 Z" fill="#eef4ff" stroke="#5573ad" stroke-width="0.9"/><path d="M8.5 0.5 V3.5 H11.5" fill="#dfe9fb" stroke="#5573ad" stroke-width="0.9"/><path d="M2.5 3.5 H7 M2.5 5.5 H9.5 M2.5 7.5 H9.5 M2.5 9.5 H9.5" stroke="#4f7fdc" stroke-width="0.9"/></svg>
<span class="t" style="left:62.3px;top:105.0px;font-size:12.5px;letter-spacing:0.23px;">$1.begin(), $1.end()  (be Tab)</span>
<div class="a" style="left:33px;top:131px;width:9px;height:1px;background:repeating-linear-gradient(90deg,#a0a0a0 0 1px,transparent 1px 2px)"></div>
<svg style="left:44px;top:125px" width="12" height="13" viewBox="0 0 12 13"><path d="M0.5 0.5 H8.5 L11.5 3.5 V12.5 H10 L9 11.5 L8 12.5 H7 L6 11.5 L5 12.5 H4 L3 11.5 L2 12.5 H0.5 Z" fill="#eef4ff" stroke="#5573ad" stroke-width="0.9"/><path d="M8.5 0.5 V3.5 H11.5" fill="#dfe9fb" stroke="#5573ad" stroke-width="0.9"/><path d="M2.5 3.5 H7 M2.5 5.5 H9.5 M2.5 7.5 H9.5 M2.5 9.5 H9.5" stroke="#4f7fdc" stroke-width="0.9"/></svg>
<span class="t" style="left:62.3px;top:125.0px;font-size:12.5px;letter-spacing:0.56px;">Block Comment  (/* Tab)</span>
<div class="a" style="left:33px;top:151px;width:9px;height:1px;background:repeating-linear-gradient(90deg,#a0a0a0 0 1px,transparent 1px 2px)"></div>
<svg style="left:44px;top:145px" width="12" height="13" viewBox="0 0 12 13"><path d="M0.5 0.5 H8.5 L11.5 3.5 V12.5 H10 L9 11.5 L8 12.5 H7 L6 11.5 L5 12.5 H4 L3 11.5 L2 12.5 H0.5 Z" fill="#eef4ff" stroke="#5573ad" stroke-width="0.9"/><path d="M8.5 0.5 V3.5 H11.5" fill="#dfe9fb" stroke="#5573ad" stroke-width="0.9"/><path d="M2.5 3.5 H7 M2.5 5.5 H9.5 M2.5 7.5 H9.5 M2.5 9.5 H9.5" stroke="#4f7fdc" stroke-width="0.9"/></svg>
<span class="t" style="left:62.3px;top:145.0px;font-size:12.5px;letter-spacing:0.25px;">class  (cl Tab)</span>
<div class="a" style="left:33px;top:171px;width:9px;height:1px;background:repeating-linear-gradient(90deg,#a0a0a0 0 1px,transparent 1px 2px)"></div>
<svg style="left:44px;top:165px" width="12" height="13" viewBox="0 0 12 13"><path d="M0.5 0.5 H8.5 L11.5 3.5 V12.5 H10 L9 11.5 L8 12.5 H7 L6 11.5 L5 12.5 H4 L3 11.5 L2 12.5 H0.5 Z" fill="#eef4ff" stroke="#5573ad" stroke-width="0.9"/><path d="M8.5 0.5 V3.5 H11.5" fill="#dfe9fb" stroke="#5573ad" stroke-width="0.9"/><path d="M2.5 3.5 H7 M2.5 5.5 H9.5 M2.5 7.5 H9.5 M2.5 9.5 H9.5" stroke="#4f7fdc" stroke-width="0.9"/></svg>
<span class="t" style="left:62.3px;top:165.0px;font-size:12.5px;letter-spacing:0.35px;">connect  (con Tab)</span>
<div class="a" style="left:33px;top:191px;width:9px;height:1px;background:repeating-linear-gradient(90deg,#a0a0a0 0 1px,transparent 1px 2px)"></div>
<svg style="left:44px;top:185px" width="12" height="13" viewBox="0 0 12 13"><path d="M0.5 0.5 H8.5 L11.5 3.5 V12.5 H10 L9 11.5 L8 12.5 H7 L6 11.5 L5 12.5 H4 L3 11.5 L2 12.5 H0.5 Z" fill="#eef4ff" stroke="#5573ad" stroke-width="0.9"/><path d="M8.5 0.5 V3.5 H11.5" fill="#dfe9fb" stroke="#5573ad" stroke-width="0.9"/><path d="M2.5 3.5 H7 M2.5 5.5 H9.5 M2.5 7.5 H9.5 M2.5 9.5 H9.5" stroke="#4f7fdc" stroke-width="0.9"/></svg>
<span class="t" style="left:62.3px;top:185.0px;font-size:12.5px;letter-spacing:0.35px;">disconnect  (dis Tab)</span>
<div class="a" style="left:33px;top:211px;width:9px;height:1px;background:repeating-linear-gradient(90deg,#a0a0a0 0 1px,transparent 1px 2px)"></div>
<svg style="left:44px;top:205px" width="12" height="13" viewBox="0 0 12 13"><path d="M0.5 0.5 H8.5 L11.5 3.5 V12.5 H10 L9 11.5 L8 12.5 H7 L6 11.5 L5 12.5 H4 L3 11.5 L2 12.5 H0.5 Z" fill="#eef4ff" stroke="#5573ad" stroke-width="0.9"/><path d="M8.5 0.5 V3.5 H11.5" fill="#dfe9fb" stroke="#5573ad" stroke-width="0.9"/><path d="M2.5 3.5 H7 M2.5 5.5 H9.5 M2.5 7.5 H9.5 M2.5 9.5 H9.5" stroke="#4f7fdc" stroke-width="0.9"/></svg>
<span class="t" style="left:62.3px;top:205.0px;font-size:12.5px;letter-spacing:0.75px;">do  (do Tab)</span>
<div class="a" style="left:33px;top:231px;width:9px;height:1px;background:repeating-linear-gradient(90deg,#a0a0a0 0 1px,transparent 1px 2px)"></div>
<svg style="left:44px;top:225px" width="12" height="13" viewBox="0 0 12 13"><path d="M0.5 0.5 H8.5 L11.5 3.5 V12.5 H10 L9 11.5 L8 12.5 H7 L6 11.5 L5 12.5 H4 L3 11.5 L2 12.5 H0.5 Z" fill="#eef4ff" stroke="#5573ad" stroke-width="0.9"/><path d="M8.5 0.5 V3.5 H11.5" fill="#dfe9fb" stroke="#5573ad" stroke-width="0.9"/><path d="M2.5 3.5 H7 M2.5 5.5 H9.5 M2.5 7.5 H9.5 M2.5 9.5 H9.5" stroke="#4f7fdc" stroke-width="0.9"/></svg>
<span class="t" style="left:62.3px;top:225.0px;font-size:12.5px;letter-spacing:0.67px;">for  (for Tab)</span>
<div class="a" style="left:33px;top:251px;width:9px;height:1px;background:repeating-linear-gradient(90deg,#a0a0a0 0 1px,transparent 1px 2px)"></div>
<svg style="left:44px;top:245px" width="12" height="13" viewBox="0 0 12 13"><path d="M0.5 0.5 H8.5 L11.5 3.5 V12.5 H10 L9 11.5 L8 12.5 H7 L6 11.5 L5 12.5 H4 L3 11.5 L2 12.5 H0.5 Z" fill="#eef4ff" stroke="#5573ad" stroke-width="0.9"/><path d="M8.5 0.5 V3.5 H11.5" fill="#dfe9fb" stroke="#5573ad" stroke-width="0.9"/><path d="M2.5 3.5 H7 M2.5 5.5 H9.5 M2.5 7.5 H9.5 M2.5 9.5 H9.5" stroke="#4f7fdc" stroke-width="0.9"/></svg>
<span class="t" style="left:62.3px;top:245.0px;font-size:12.5px;letter-spacing:0.44px;">foreach  (fe Tab)</span>
<div class="a" style="left:33px;top:271px;width:9px;height:1px;background:repeating-linear-gradient(90deg,#a0a0a0 0 1px,transparent 1px 2px)"></div>
<svg style="left:44px;top:265px" width="12" height="13" viewBox="0 0 12 13"><path d="M0.5 0.5 H8.5 L11.5 3.5 V12.5 H10 L9 11.5 L8 12.5 H7 L6 11.5 L5 12.5 H4 L3 11.5 L2 12.5 H0.5 Z" fill="#eef4ff" stroke="#5573ad" stroke-width="0.9"/><path d="M8.5 0.5 V3.5 H11.5" fill="#dfe9fb" stroke="#5573ad" stroke-width="0.9"/><path d="M2.5 3.5 H7 M2.5 5.5 H9.5 M2.5 7.5 H9.5 M2.5 9.5 H9.5" stroke="#4f7fdc" stroke-width="0.9"/></svg>
<span class="t" style="left:62.3px;top:265.0px;font-size:12.5px;letter-spacing:0.45px;">fprintf ...  (fprintf Tab)</span>
<div class="a" style="left:33px;top:291px;width:9px;height:1px;background:repeating-linear-gradient(90deg,#a0a0a0 0 1px,transparent 1px 2px)"></div>
<svg style="left:44px;top:285px" width="12" height="13" viewBox="0 0 12 13"><path d="M0.5 0.5 H8.5 L11.5 3.5 V12.5 H10 L9 11.5 L8 12.5 H7 L6 11.5 L5 12.5 H4 L3 11.5 L2 12.5 H0.5 Z" fill="#eef4ff" stroke="#5573ad" stroke-width="0.9"/><path d="M8.5 0.5 V3.5 H11.5" fill="#dfe9fb" stroke="#5573ad" stroke-width="0.9"/><path d="M2.5 3.5 H7 M2.5 5.5 H9.5 M2.5 7.5 H9.5 M2.5 9.5 H9.5" stroke="#4f7fdc" stroke-width="0.9"/></svg>
<span class="t" style="left:62.3px;top:285.0px;font-size:12.5px;letter-spacing:0.49px;">if  (if Tab)</span>
<div class="a" style="left:33px;top:311px;width:9px;height:1px;background:repeating-linear-gradient(90deg,#a0a0a0 0 1px,transparent 1px 2px)"></div>
<svg style="left:44px;top:305px" width="12" height="13" viewBox="0 0 12 13"><path d="M0.5 0.5 H8.5 L11.5 3.5 V12.5 H10 L9 11.5 L8 12.5 H7 L6 11.5 L5 12.5 H4 L3 11.5 L2 12.5 H0.5 Z" fill="#eef4ff" stroke="#5573ad" stroke-width="0.9"/><path d="M8.5 0.5 V3.5 H11.5" fill="#dfe9fb" stroke="#5573ad" stroke-width="0.9"/><path d="M2.5 3.5 H7 M2.5 5.5 H9.5 M2.5 7.5 H9.5 M2.5 9.5 H9.5" stroke="#4f7fdc" stroke-width="0.9"/></svg>
<span class="t" style="left:62.3px;top:305.0px;font-size:12.5px;letter-spacing:0.32px;">main()  (main Tab)</span>
<div class="a" style="left:33px;top:331px;width:9px;height:1px;background:repeating-linear-gradient(90deg,#a0a0a0 0 1px,transparent 1px 2px)"></div>
<svg style="left:44px;top:325px" width="12" height="13" viewBox="0 0 12 13"><path d="M0.5 0.5 H8.5 L11.5 3.5 V12.5 H10 L9 11.5 L8 12.5 H7 L6 11.5 L5 12.5 H4 L3 11.5 L2 12.5 H0.5 Z" fill="#eef4ff" stroke="#5573ad" stroke-width="0.9"/><path d="M8.5 0.5 V3.5 H11.5" fill="#dfe9fb" stroke="#5573ad" stroke-width="0.9"/><path d="M2.5 3.5 H7 M2.5 5.5 H9.5 M2.5 7.5 H9.5 M2.5 9.5 H9.5" stroke="#4f7fdc" stroke-width="0.9"/></svg>
<span class="t" style="left:62.3px;top:325.0px;font-size:12.5px;letter-spacing:0.28px;">namespace  (ns Tab)</span>
<div class="a" style="left:33px;top:351px;width:9px;height:1px;background:repeating-linear-gradient(90deg,#a0a0a0 0 1px,transparent 1px 2px)"></div>
<svg style="left:44px;top:345px" width="12" height="13" viewBox="0 0 12 13"><path d="M0.5 0.5 H8.5 L11.5 3.5 V12.5 H10 L9 11.5 L8 12.5 H7 L6 11.5 L5 12.5 H4 L3 11.5 L2 12.5 H0.5 Z" fill="#eef4ff" stroke="#5573ad" stroke-width="0.9"/><path d="M8.5 0.5 V3.5 H11.5" fill="#dfe9fb" stroke="#5573ad" stroke-width="0.9"/><path d="M2.5 3.5 H7 M2.5 5.5 H9.5 M2.5 7.5 H9.5 M2.5 9.5 H9.5" stroke="#4f7fdc" stroke-width="0.9"/></svg>
<span class="t" style="left:62.3px;top:345.0px;font-size:12.5px;letter-spacing:0.45px;">printf ...  (printf Tab)</span>
<div class="a" style="left:33px;top:371px;width:9px;height:1px;background:repeating-linear-gradient(90deg,#a0a0a0 0 1px,transparent 1px 2px)"></div>
<svg style="left:44px;top:365px" width="12" height="13" viewBox="0 0 12 13"><path d="M0.5 0.5 H8.5 L11.5 3.5 V12.5 H10 L9 11.5 L8 12.5 H7 L6 11.5 L5 12.5 H4 L3 11.5 L2 12.5 H0.5 Z" fill="#eef4ff" stroke="#5573ad" stroke-width="0.9"/><path d="M8.5 0.5 V3.5 H11.5" fill="#dfe9fb" stroke="#5573ad" stroke-width="0.9"/><path d="M2.5 3.5 H7 M2.5 5.5 H9.5 M2.5 7.5 H9.5 M2.5 9.5 H9.5" stroke="#4f7fdc" stroke-width="0.9"/></svg>
<span class="t" style="left:62.3px;top:365.0px;font-size:12.5px;letter-spacing:0.30px;">Read File Into Vector</span>
<div class="a" style="left:33px;top:391px;width:9px;height:1px;background:repeating-linear-gradient(90deg,#a0a0a0 0 1px,transparent 1px 2px)"></div>
<svg style="left:44px;top:385px" width="12" height="13" viewBox="0 0 12 13"><path d="M0.5 0.5 H8.5 L11.5 3.5 V12.5 H10 L9 11.5 L8 12.5 H7 L6 11.5 L5 12.5 H4 L3 11.5 L2 12.5 H0.5 Z" fill="#eef4ff" stroke="#5573ad" stroke-width="0.9"/><path d="M8.5 0.5 V3.5 H11.5" fill="#dfe9fb" stroke="#5573ad" stroke-width="0.9"/><path d="M2.5 3.5 H7 M2.5 5.5 H9.5 M2.5 7.5 H9.5 M2.5 9.5 H9.5" stroke="#4f7fdc" stroke-width="0.9"/></svg>
<span class="t" style="left:62.3px;top:385.0px;font-size:12.5px;letter-spacing:0.42px;">std::map  (map Tab)</span>
<div class="a" style="left:33px;top:411px;width:9px;height:1px;background:repeating-linear-gradient(90deg,#a0a0a0 0 1px,transparent 1px 2px)"></div>
<svg style="left:44px;top:405px" width="12" height="13" viewBox="0 0 12 13"><path d="M0.5 0.5 H8.5 L11.5 3.5 V12.5 H10 L9 11.5 L8 12.5 H7 L6 11.5 L5 12.5 H4 L3 11.5 L2 12.5 H0.5 Z" fill="#eef4ff" stroke="#5573ad" stroke-width="0.9"/><path d="M8.5 0.5 V3.5 H11.5" fill="#dfe9fb" stroke="#5573ad" stroke-width="0.9"/><path d="M2.5 3.5 H7 M2.5 5.5 H9.5 M2.5 7.5 H9.5 M2.5 9.5 H9.5" stroke="#4f7fdc" stroke-width="0.9"/></svg>
<span class="t" style="left:62.3px;top:405.0px;font-size:12.5px;letter-spacing:0.28px;">std::vector  (vector Tab)</span>
<div class="a" style="left:33px;top:431px;width:9px;height:1px;background:repeating-linear-gradient(90deg,#a0a0a0 0 1px,transparent 1px 2px)"></div>
<svg style="left:44px;top:425px" width="12" height="13" viewBox="0 0 12 13"><path d="M0.5 0.5 H8.5 L11.5 3.5 V12.5 H10 L9 11.5 L8 12.5 H7 L6 11.5 L5 12.5 H4 L3 11.5 L2 12.5 H0.5 Z" fill="#eef4ff" stroke="#5573ad" stroke-width="0.9"/><path d="M8.5 0.5 V3.5 H11.5" fill="#dfe9fb" stroke="#5573ad" stroke-width="0.9"/><path d="M2.5 3.5 H7 M2.5 5.5 H9.5 M2.5 7.5 H9.5 M2.5 9.5 H9.5" stroke="#4f7fdc" stroke-width="0.9"/></svg>
<span class="t" style="left:62.3px;top:425.0px;font-size:12.5px;letter-spacing:0.37px;">struct  (st Tab)</span>
</div>
<div class="a" style="left:193px;top:153px;width:16px;height:429px;background:#f0f0f0"></div>
<div class="a" style="left:193px;top:260px;width:15.4px;height:155.5px;background:#cdcdcd"></div>
<svg style="left:196px;top:160px" width="10" height="6"><path d="M0.8 5.2 L4.5 1.5 L8.2 5.2" fill="none" stroke="#555" stroke-width="2.1"/></svg>
<svg style="left:196px;top:570px" width="10" height="6"><path d="M0.8 0.8 L4.5 4.5 L8.2 0.8" fill="none" stroke="#555" stroke-width="2.1"/></svg>
<div class="a" style="left:2px;top:582px;width:207px;height:16px;background:#f0f0f0"></div>
<div class="a" style="left:20px;top:582px;width:104px;height:15px;background:#cdcdcd"></div>
<svg style="left:8px;top:586px" width="6" height="10"><path d="M5.2 0.8 L1.5 4.5 L5.2 8.2" fill="none" stroke="#555" stroke-width="2.1"/></svg>
<svg style="left:181px;top:586px" width="6" height="10"><path d="M0.8 0.8 L4.5 4.5 L0.8 8.2" fill="none" stroke="#555" stroke-width="2.1"/></svg>
<svg style="left:194px;top:138px" width="8" height="8"><path d="M0.5 0.5 L7.5 7.5 M7.5 0.5 L0.5 7.5" stroke="#000" stroke-width="1.7"/></svg>
<div class="a" style="left:213px;top:130px;width:98px;height:26px;background:#fff;border:1px solid #d9d9d9;border-bottom:none"></div>
<span class="t" style="left:243.5px;top:135.0px;font-size:12.5px;letter-spacing:0.33px;">dup.txt</span>
<svg style="left:223px;top:133px" width="12" height="16" viewBox="0 0 12 16"><path d="M0.5 0.5 H8 L11.5 4 V15.5 H0.5 Z" fill="#fff" stroke="#6a6a6a"/><path d="M8 0.5 V4 H11.5" fill="none" stroke="#6a6a6a"/><path d="M2.5 5.5 H9.5 M2.5 7.5 H9.5 M2.5 9.5 H9.5 M2.5 11.5 H9.5 M2.5 13.5 H9.5 M2.5 3.5 H6.5" stroke="#8a8a8a" stroke-width="0.9"/></svg>
<svg style="left:294px;top:138px" width="8" height="8"><path d="M0.5 0.5 L7.5 7.5 M7.5 0.5 L0.5 7.5" stroke="#8a8a8a" stroke-width="1.2"/></svg>
<div class="a" style="left:213px;top:154px;width:681.5px;height:445px;background:#fff;border:1px solid #dedede;border-top:none"></div>
<div class="a" style="left:217.5px;top:156.6px;width:673.6px;height:437.4px;background:#2e2b26;border-top:1.2px solid #6e6e6e;border-left:1.2px solid #4a4844"></div>
<div id="ed" class="a" style="left:217px;top:156px;width:658px;height:438px;overflow:hidden">
<span class="t e" style="left:10.4px;top:6.8px;font-size:16.4px;letter-spacing:-0.20px;">00007FF84DD63670 <span class="bb">|</span> 8B 14 25 30 03 FE 7F</span>
<span class="t e" style="left:405.3px;top:6.4px;font-size:18.6px;-webkit-text-stroke:0.12px #f1efdc">|</span>
<span class="t m" style="left:416.0px;top:6.8px;font-size:16.4px;letter-spacing:-1.00px;">mov</span>
<span class="t r" style="left:453.4px;top:6.8px;font-size:16.4px;letter-spacing:-0.82px;">edx</span>
<span class="t e" style="left:479.6px;top:6.8px;font-size:16.4px;letter-spacing:0.87px;">,dword ptr</span>
<span class="t e" style="left:10.4px;top:31.8px;font-size:16.4px;letter-spacing:-0.47px;">ds:[7FFE0330]</span>
<span class="t e" style="left:10.4px;top:56.8px;font-size:16.4px;letter-spacing:-0.19px;">00007FF84DD63677 <span class="bb">|</span> 8D 4E 40</span>
<span class="t e" style="left:375.2px;top:56.4px;font-size:18.6px;-webkit-text-stroke:0.12px #f1efdc">|</span>
<span class="t m" style="left:385.6px;top:56.8px;font-size:16.4px;letter-spacing:-0.90px;">lea</span>
<span class="t r" style="left:412.3px;top:56.8px;font-size:16.4px;letter-spacing:-1.48px;">ecx</span>
<span class="t e" style="left:436.4px;top:56.8px;font-size:16.4px;letter-spacing:0.85px;">,dword ptr</span>
<span class="t e" style="left:10.4px;top:81.8px;font-size:16.4px;letter-spacing:0.11px;">ds:[rsi+40]</span>
<span class="t e" style="left:10.4px;top:106.8px;font-size:16.4px;letter-spacing:-0.19px;">00007FF84DD6367A <span class="bb">|</span> 8B C2</span>
<span class="t e" style="left:369.6px;top:106.4px;font-size:18.6px;-webkit-text-stroke:0.12px #f1efdc">|</span>
<span class="t m" style="left:379.9px;top:106.8px;font-size:16.4px;letter-spacing:-1.00px;">mov</span>
<span class="t r" style="left:417.3px;top:106.8px;font-size:16.4px;letter-spacing:-0.98px;">eax</span>
<span class="t e" style="left:443.2px;top:106.8px;font-size:16.4px;">,</span>
<span class="t r" style="left:447.4px;top:106.8px;font-size:16.4px;letter-spacing:-0.62px;">edx</span>
<span class="t e" style="left:10.4px;top:131.8px;font-size:16.4px;letter-spacing:-0.19px;">00007FF84DD6367C <span class="bb">|</span> BB 01 00 00 C0</span>
<span class="t e" style="left:394.6px;top:131.4px;font-size:18.6px;-webkit-text-stroke:0.12px #f1efdc">|</span>
<span class="t m" style="left:404.6px;top:131.8px;font-size:16.4px;letter-spacing:-0.65px;">mov</span>
<span class="t r" style="left:10.4px;top:156.8px;font-size:16.4px;letter-spacing:-1.12px;">ebx</span>
<span class="t e" style="left:37.0px;top:156.8px;font-size:16.4px;letter-spacing:-0.49px;">,C0000001</span>
<span class="t e" style="left:10.4px;top:181.8px;font-size:16.4px;letter-spacing:-0.23px;">00007FF84DD63681 <span class="bb">|</span> 83 E0 3F</span>
<span class="t e" style="left:372.6px;top:181.4px;font-size:18.6px;-webkit-text-stroke:0.12px #f1efdc">|</span>
<span class="t m" style="left:382.6px;top:181.8px;font-size:16.4px;letter-spacing:-0.57px;">and</span>
<span class="t r" style="left:416.3px;top:181.8px;font-size:16.4px;letter-spacing:-0.98px;">eax</span>
<span class="t e" style="left:441.4px;top:181.8px;font-size:16.4px;letter-spacing:-0.84px;">,3F</span>
<span class="t e" style="left:10.4px;top:206.8px;font-size:16.4px;letter-spacing:-0.24px;">00007FF84DD63684 <span class="bb">|</span> 2B C8</span>
<span class="t e" style="left:367.6px;top:206.4px;font-size:18.6px;-webkit-text-stroke:0.12px #f1efdc">|</span>
<span class="t m" style="left:377.9px;top:206.8px;font-size:16.4px;letter-spacing:-1.52px;">sub</span>
<span class="t r" style="left:409.3px;top:206.8px;font-size:16.4px;letter-spacing:-1.33px;">ecx</span>
<span class="t e" style="left:434.5px;top:206.8px;font-size:16.4px;">,</span>
<span class="t r" style="left:438.7px;top:206.8px;font-size:16.4px;letter-spacing:-0.83px;">eax</span>
<span class="t e" style="left:10.4px;top:231.8px;font-size:16.4px;letter-spacing:-0.24px;">00007FF84DD63686 <span class="bb">|</span> 8B C2</span>
<span class="t e" style="left:367.6px;top:231.4px;font-size:18.6px;-webkit-text-stroke:0.12px #f1efdc">|</span>
<span class="t m" style="left:377.9px;top:231.8px;font-size:16.4px;letter-spacing:-0.80px;">mov</span>
<span class="t r" style="left:415.6px;top:231.8px;font-size:16.4px;letter-spacing:-0.98px;">eax</span>
<span class="t e" style="left:441.5px;top:231.8px;font-size:16.4px;">,</span>
<span class="t r" style="left:445.4px;top:231.8px;font-size:16.4px;letter-spacing:-0.62px;">edx</span>
<span class="t e" style="left:10.4px;top:256.8px;font-size:16.4px;letter-spacing:-0.15px;">00007FF84DD63688 <span class="bb">|</span> 49 D3 C8</span>
<span class="t e" style="left:377.6px;top:256.4px;font-size:18.6px;-webkit-text-stroke:0.12px #f1efdc">|</span>
<span class="t m" style="left:387.9px;top:256.8px;font-size:16.4px;letter-spacing:-1.04px;">ror</span>
<span class="t e" style="left:414.6px;top:256.8px;font-size:16.4px;letter-spacing:-0.22px;">r8,cl</span>
<span class="t e" style="left:10.4px;top:281.8px;font-size:16.4px;letter-spacing:-0.22px;">00007FF84DD6368B <span class="bb">|</span> 4C 33 C0</span>
<span class="t e" style="left:377.6px;top:281.4px;font-size:18.6px;-webkit-text-stroke:0.12px #f1efdc">|</span>
<span class="t m" style="left:387.6px;top:281.8px;font-size:16.4px;letter-spacing:-1.41px;">xor</span>
<span class="t e" style="left:416.6px;top:281.8px;font-size:16.4px;letter-spacing:-0.10px;">r8,rax</span>
<span class="t e" style="left:10.4px;top:306.8px;font-size:16.4px;letter-spacing:-0.25px;">00007FF84DD6368E <span class="bb">|</span> 4C 89 07</span>
<span class="t e" style="left:374.2px;top:306.4px;font-size:18.6px;-webkit-text-stroke:0.12px #f1efdc">|</span>
<span class="t m" style="left:384.6px;top:306.8px;font-size:16.4px;letter-spacing:-0.85px;">mov</span>
<span class="t e" style="left:422.3px;top:306.8px;font-size:16.4px;letter-spacing:0.90px;">qword ptr</span>
<span class="t e" style="left:10.4px;top:331.8px;font-size:16.4px;letter-spacing:0.12px;">ds:[rdi],r8</span>
<span class="t e" style="left:10.4px;top:356.8px;font-size:16.4px;letter-spacing:-0.25px;">00007FF84DD63691 <span class="bb">|</span> 0F 45 DE</span>
<span class="t e" style="left:375.6px;top:356.4px;font-size:18.6px;-webkit-text-stroke:0.12px #f1efdc">|</span>
<span class="t m" style="left:385.6px;top:356.8px;font-size:16.4px;letter-spacing:-0.57px;">cmovne</span>
<span class="t r" style="left:450.4px;top:356.8px;font-size:16.4px;letter-spacing:-0.93px;">ebx</span>
<span class="t e" style="left:477.3px;top:356.8px;font-size:16.4px;">,</span>
<span class="t r" style="left:481.8px;top:356.8px;font-size:16.4px;letter-spacing:-1.70px;">esi</span>
<span class="t e" style="left:10.4px;top:406.8px;font-size:16.4px;letter-spacing:-0.18px;">00007FF84DD63694 <span class="bb">|</span> E9 48 01 00 00</span>
<span class="t e" style="left:387.9px;top:406.4px;font-size:18.6px;-webkit-text-stroke:0.12px #f1efdc">|</span>
<span class="t m" style="left:398.4px;top:406.8px;font-size:16.4px;letter-spacing:-0.17px;">jmp</span>
<span class="t e" style="left:10.4px;top:431.8px;font-size:16.4px;letter-spacing:-0.26px;">ntdll.7FF84DD637E1</span>
<span class="t e" style="left:157.1px;top:31.4px;font-size:18.6px;-webkit-text-stroke:0.12px #f1efdc">|</span>
<svg style="left:162px;top:33.8px" width="8" height="12" viewBox="0 0 8 12"><path d="M4 0 V11 M0.6 7 L4 11 L7.4 7" fill="none" stroke="#2a7fe0" stroke-width="1.1"/></svg>
<span class="t e" style="left:142.7px;top:81.4px;font-size:18.6px;-webkit-text-stroke:0.12px #f1efdc">|</span>
<svg style="left:147.6px;top:83.8px" width="8" height="12" viewBox="0 0 8 12"><path d="M4 0 V11 M0.6 7 L4 11 L7.4 7" fill="none" stroke="#2a7fe0" stroke-width="1.1"/></svg>
<span class="t e" style="left:618.7px;top:106.4px;font-size:18.6px;-webkit-text-stroke:0.12px #f1efdc">|</span>
<svg style="left:623.6px;top:108.8px" width="8" height="12" viewBox="0 0 8 12"><path d="M4 0 V11 M0.6 7 L4 11 L7.4 7" fill="none" stroke="#2a7fe0" stroke-width="1.1"/></svg>
<span class="t e" style="left:234.6px;top:156.4px;font-size:18.6px;-webkit-text-stroke:0.12px #f1efdc">|</span>
<svg style="left:239.5px;top:158.8px" width="8" height="12" viewBox="0 0 8 12"><path d="M4 0 V11 M0.6 7 L4 11 L7.4 7" fill="none" stroke="#2a7fe0" stroke-width="1.1"/></svg>
<span class="t e" style="left:613.6px;top:181.4px;font-size:18.6px;-webkit-text-stroke:0.12px #f1efdc">|</span>
<svg style="left:618.5px;top:183.8px" width="8" height="12" viewBox="0 0 8 12"><path d="M4 0 V11 M0.6 7 L4 11 L7.4 7" fill="none" stroke="#2a7fe0" stroke-width="1.1"/></svg>
<span class="t e" style="left:608.7px;top:206.4px;font-size:18.6px;-webkit-text-stroke:0.12px #f1efdc">|</span>
<svg style="left:613.6px;top:208.8px" width="8" height="12" viewBox="0 0 8 12"><path d="M4 0 V11 M0.6 7 L4 11 L7.4 7" fill="none" stroke="#2a7fe0" stroke-width="1.1"/></svg>
<span class="t e" style="left:616.7px;top:231.4px;font-size:18.6px;-webkit-text-stroke:0.12px #f1efdc">|</span>
<svg style="left:621.6px;top:233.8px" width="8" height="12" viewBox="0 0 8 12"><path d="M4 0 V11 M0.6 7 L4 11 L7.4 7" fill="none" stroke="#2a7fe0" stroke-width="1.1"/></svg>
<span class="t e" style="left:599.4px;top:256.4px;font-size:18.6px;-webkit-text-stroke:0.12px #f1efdc">|</span>
<svg style="left:604.3px;top:258.8px" width="8" height="12" viewBox="0 0 8 12"><path d="M4 0 V11 M0.6 7 L4 11 L7.4 7" fill="none" stroke="#2a7fe0" stroke-width="1.1"/></svg>
<span class="t e" style="left:607.5px;top:281.4px;font-size:18.6px;-webkit-text-stroke:0.12px #f1efdc">|</span>
<svg style="left:612.4px;top:283.8px" width="8" height="12" viewBox="0 0 8 12"><path d="M4 0 V11 M0.6 7 L4 11 L7.4 7" fill="none" stroke="#2a7fe0" stroke-width="1.1"/></svg>
<span class="t e" style="left:154.4px;top:331.4px;font-size:18.6px;-webkit-text-stroke:0.12px #f1efdc">|</span>
<svg style="left:159.3px;top:333.8px" width="8" height="12" viewBox="0 0 8 12"><path d="M4 0 V11 M0.6 7 L4 11 L7.4 7" fill="none" stroke="#2a7fe0" stroke-width="1.1"/></svg>
<span class="t e" style="left:9.7px;top:381.4px;font-size:18.6px;-webkit-text-stroke:0.12px #f1efdc">|</span>
<svg style="left:14.6px;top:383.8px" width="8" height="12" viewBox="0 0 8 12"><path d="M4 0 V11 M0.6 7 L4 11 L7.4 7" fill="none" stroke="#2a7fe0" stroke-width="1.1"/></svg>
<span class="t e" style="left:257.0px;top:431.4px;font-size:18.6px;-webkit-text-stroke:0.12px #f1efdc">|</span>
<svg style="left:261.9px;top:433.8px" width="8" height="12" viewBox="0 0 8 12"><path d="M4 0 V11 M0.6 7 L4 11 L7.4 7" fill="none" stroke="#2a7fe0" stroke-width="1.1"/></svg>
</div>
<div class="a" style="left:875px;top:258px;width:15px;height:33px;background:#5c5c5c"></div>
<svg style="left:878.5px;top:164px" width="8" height="6"><path d="M0.6 5 L4 1.4 L7.4 5" fill="none" stroke="#707070" stroke-width="1.7"/></svg>
<div class="a" style="left:1px;top:600px;width:895px;height:22px;background:#f0f0f0"></div>
<span class="t" style="left:2.8px;top:606.0px;font-size:12.5px;letter-spacing:0.10px;">11.4 KB (11,715 字节) , 111 行。</span>
<span class="t" style="left:431.7px;top:606.0px;font-size:12.5px;letter-spacing:0.13px;">x86 Assembler</span>
<span class="t" style="left:524.3px;top:606.0px;font-size:12.5px;letter-spacing:-0.11px;">行 7,列 70</span>
<span class="t" style="left:594.8px;top:606.0px;font-size:12.5px;letter-spacing:-0.30px;">简体中文(GB2312)</span>
<span class="t" style="left:768.0px;top:606.0px;font-size:12.5px;letter-spacing:-0.51px;">0 字符</span>
<span class="t" style="left:811.6px;top:606.0px;font-size:12.5px;letter-spacing:0.55px;">0/111 行</span>
<div class="a" style="left:519px;top:602px;width:1px;height:19px;background:#d7d7d7"></div>
<div class="a" style="left:590px;top:602px;width:1px;height:19px;background:#d7d7d7"></div>
<div class="a" style="left:700px;top:602px;width:1px;height:19px;background:#d7d7d7"></div>
<div class="a" style="left:732px;top:602px;width:1px;height:19px;background:#d7d7d7"></div>
<div class="a" style="left:764px;top:602px;width:1px;height:19px;background:#d7d7d7"></div>
<div class="a" style="left:805px;top:602px;width:1px;height:19px;background:#d7d7d7"></div>
<div class="a" style="left:877px;top:602px;width:1px;height:19px;background:#d7d7d7"></div>
<svg style="left:884px;top:609px" width="12" height="12"><rect x="9" y="0" width="2" height="2" fill="#bfbfbf"/><rect x="5" y="4" width="2" height="2" fill="#bfbfbf"/><rect x="9" y="4" width="2" height="2" fill="#bfbfbf"/><rect x="1" y="8" width="2" height="2" fill="#bfbfbf"/><rect x="5" y="8" width="2" height="2" fill="#bfbfbf"/><rect x="9" y="8" width="2" height="2" fill="#bfbfbf"/></svg>
<div class="t" style="left:801px;top:563.5px;font-size:33px;font-style:italic;color:#1d3874;-webkit-text-stroke:1.2px #1d3874;font-family:'Liberation Sans',sans-serif;font-weight:bold;transform-origin:0 0;transform:scaleX(1.8) skewX(-12deg)">4</div>
<div class="t" style="left:833px;top:566.5px;font-size:18.5px;font-style:italic;color:#1d3874;-webkit-text-stroke:1px #1d3874;font-family:'Liberation Sans',sans-serif;font-weight:bold;transform-origin:0 0;transform:scaleX(2.62)">23</div>
<div class="t" style="left:836px;top:582.5px;font-size:8.5px;font-style:italic;color:#1d3874;-webkit-text-stroke:0.5px #1d3874;font-family:'Liberation Sans',sans-serif;font-weight:bold;transform-origin:0 0;transform:scaleX(1.95)">DOWN</div>
<div class="t" style="left:793px;top:587.4px;font-size:26.5px;color:#0a0a0a;-webkit-text-stroke:0.5px #0a0a0a;text-shadow:1.5px 1.5px 1px #b0b0b0;font-family:'Liberation Sans',sans-serif;font-weight:bold;transform-origin:0 0;transform:scaleX(0.548)">423down.com</div>
</body></html>
